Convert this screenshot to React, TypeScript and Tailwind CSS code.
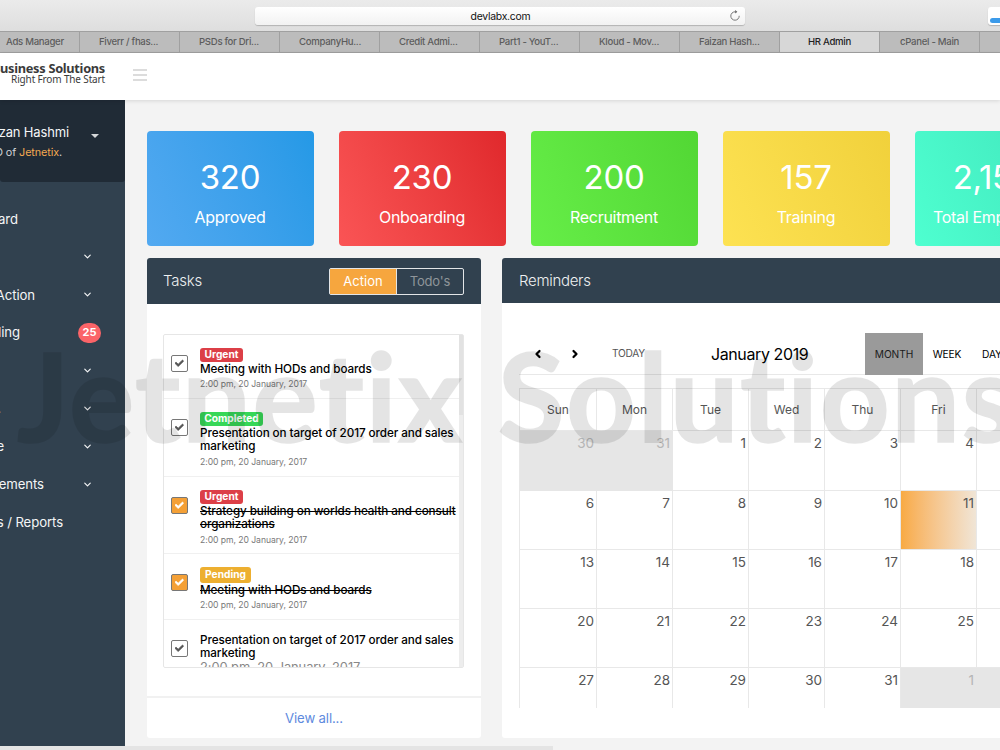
import { ChevronDown, ChevronLeft, ChevronRight } from "lucide-react";
import { FaCheck } from "react-icons/fa";

const TABS = [
  { label: "Ads Manager", pad: "pl-[26px]" },
  { label: "Fiverr / fhas...", pad: "pl-[19px]" },
  { label: "PSDs for Dri...", pad: "pl-[19px]" },
  { label: "CompanyHu...", pad: "pl-[19px]" },
  { label: "Credit Admi...", pad: "pl-[19px]" },
  { label: "Part1 - YouT...", pad: "pl-[19px]" },
  { label: "Kloud - Mov...", pad: "pl-[19px]" },
  { label: "Faizan Hash...", pad: "pl-[19px]" },
  { label: "HR Admin", pad: "pl-[28px]", active: true },
  { label: "cPanel - Main", pad: "pl-[20px]" },
  { label: "", pad: "" },
];

const MENU = [
  { label: "ard", width: "w-[18px]" },
  { label: "", width: "w-0", chevron: true },
  { label: "Action", width: "w-[35px]", chevron: true },
  { label: "ding", width: "w-[20px]", count: 25 },
  { label: "", width: "w-0", chevron: true },
  { label: ".", width: "w-[1px]", chevron: true },
  { label: "e", width: "w-[4px]", chevron: true },
  { label: "ements", width: "w-[44px]", chevron: true },
  { label: "s / Reports", width: "w-[63px]" },
];

const STATS = [
  { value: "320", label: "Approved", style: "w-[167px] from-[#52a9f1] to-[#2499e6]" },
  { value: "230", label: "Onboarding", style: "w-[167px] from-[#fa5455] to-[#e0282c]" },
  { value: "200", label: "Recruitment", style: "w-[167px] from-[#66ee48] to-[#52d734]" },
  { value: "157", label: "Training", style: "w-[167px] from-[#fde252] to-[#f1d13b]" },
  { value: "2,150", label: "Total Employees", style: "w-[156px] from-[#4effd0] to-[#41e6bc]" },
];

const TASKS = [
  {
    tag: "Urgent",
    tagClass: "w-[43px] h-[14px] bg-[#dc3f47]",
    title: "Meeting with HODs and boards",
    row: "h-[64px]",
    done: false,
  },
  {
    tag: "Completed",
    tagClass: "w-[63px] h-[14px] bg-[#37d758]",
    title: "Presentation on target of 2017 order and sales marketing",
    row: "h-[78px]",
    done: false,
  },
  {
    tag: "Urgent",
    tagClass: "w-[43px] h-[14px] bg-[#dc3f47]",
    title: "Strategy building on worlds health and consult organizations",
    row: "h-[77px]",
    done: true,
  },
  {
    tag: "Pending",
    tagClass: "w-[51px] h-[16px] bg-[#edaf30]",
    title: "Meeting with HODs and boards",
    row: "h-[66px]",
    done: true,
  },
  {
    title: "Presentation on target of 2017 order and sales marketing",
    row: "h-[80px]",
    done: false,
    large: true,
  },
];

const DAYS = ["Sun", "Mon", "Tue", "Wed", "Thu", "Fri", "Sat"];

const WEEKS = [
  { height: "h-[60px]", days: [30, 31, 1, 2, 3, 4, 5] },
  { height: "h-[59px]", days: [6, 7, 8, 9, 10, 11, 12] },
  { height: "h-[59px]", days: [13, 14, 15, 16, 17, 18, 19] },
  { height: "h-[59px]", days: [20, 21, 22, 23, 24, 25, 26] },
  { height: "h-[40px]", days: [27, 28, 29, 30, 31, 1, 2] },
];

function BrowserBar() {
  return (
    <div className="shrink-0">
      <div className="flex h-[31px] items-center bg-linear-to-b from-[#ebebeb] to-[#dedede] pl-[255px]">
        <div className="flex h-[18px] w-[490px] shrink-0 items-center rounded-[3px] bg-linear-to-b from-white to-[#f2f2f2] shadow-[0_1px_1px_rgba(0,0,0,0.2)]">
          <span className="flex-1 pt-[2px] pl-[1px] text-center text-[10.4px] tracking-[-0.25px] text-[#111]">
            devlabx.com
          </span>
          <svg className="-ml-[15px] mr-[5px]" width="10" height="11" viewBox="0 0 10 11" fill="none" stroke="#777" strokeWidth="1">
            <path d="M9.2 5.8A4.2 4.2 0 1 1 5 1.8h2" />
            <path d="M5 0l2.4 1.8L5 3.6z" fill="#777" stroke="none" />
          </svg>
        </div>
        <div className="ml-[243px] flex h-[18px] w-[30px] shrink-0 items-end rounded-[3px] bg-white pb-[2px] pl-[2px] shadow-[0_1px_1px_rgba(0,0,0,0.2)]">
          <div className="h-[5px] w-[28px] rounded-full bg-[#3c9bea]" />
        </div>
      </div>
      <div className="-ml-[20px] flex h-[22px] border-y border-[#a0a0a0]">
        {TABS.map((tab, i) => (
          <div
            key={i}
            className={`flex w-[100px] shrink-0 items-center whitespace-nowrap border-r border-[#a0a0a0] text-[9.6px] font-medium tracking-[-0.3px] ${tab.pad} ${
              tab.active ? "bg-[#d7d7d7] text-[#222]" : "bg-[#bcbcbc] text-[#5c5c5c]"
            }`}
          >
            {tab.label}
          </div>
        ))}
      </div>
    </div>
  );
}

function Header() {
  return (
    <header className="z-10 flex h-[47px] shrink-0 bg-white shadow-[0_1px_4px_rgba(0,0,0,0.12)]">
      <div className="flex w-[105px] flex-col items-end whitespace-nowrap pt-[8px] font-['Noto_Sans',sans-serif] text-[#3a3a3a]">
        <span className="text-[12.8px] leading-[15px] font-bold tracking-[-0.3px]">Business Solutions</span>
        <span className="-mt-[2px] text-[10px] leading-[11px] tracking-[-0.15px]">Right From The Start</span>
      </div>
      <div className="ml-[28px] flex flex-col gap-[3px] pt-[16px]">
        <span className="h-[2px] w-[14px] bg-[#dcdcdc]" />
        <span className="h-[2px] w-[14px] bg-[#dcdcdc]" />
        <span className="h-[2px] w-[14px] bg-[#dcdcdc]" />
      </div>
    </header>
  );
}

function Sidebar() {
  return (
    <aside className="w-[125px] shrink-0 overflow-hidden bg-[#31414f] text-[#f4f5f6]">
      <div className="flex h-[82px] rounded-b-[3px] bg-[#202b36] pt-[23px]">
        <div className="flex w-[69px] flex-col items-end whitespace-nowrap">
          <span className="text-[13px] leading-[18px] tracking-[-0.15px]">Faizan Hashmi</span>
          <span className="mt-[5px] mr-[7px] text-[10.8px] leading-[14px] tracking-[-0.1px] text-[#d0d3d6]">
            CEO of <span className="text-[#f3a951]">Jetnetix</span>.
          </span>
        </div>
        <svg className="mt-[11px] ml-[22px]" width="8" height="4" viewBox="0 0 8 4" fill="#d5d8da">
          <path d="M0 0h8L4 4z" />
        </svg>
      </div>
      <nav className="pt-[18px]">
        {MENU.map((item, i) => (
          <div key={i} className="flex h-[37.9px] items-center">
            <span
              className={`flex justify-end pt-[1.5px] text-[13.2px] tracking-[-0.1px] whitespace-nowrap ${item.width}`}
            >
              {item.label}
            </span>
            {item.chevron && (
              <span className="mr-[32px] ml-auto">
                <ChevronDown size={11} strokeWidth={2.6} />
              </span>
            )}
            {item.count && (
              <span className="mr-[24px] ml-auto flex h-[20px] w-[23px] items-center justify-center rounded-full bg-[#fb6468] text-[11px] font-bold text-white">
                {item.count}
              </span>
            )}
          </div>
        ))}
      </nav>
    </aside>
  );
}

function TaskItem({ task }: { task: (typeof TASKS)[number] }) {
  return (
    <div className={`flex shrink-0 border-b border-[#f0f0f0] pl-[7px] ${task.row}`}>
      <span
        className={`mt-[20px] flex h-[17px] w-[17px] shrink-0 items-center justify-center rounded-[2px] border border-[#777] ${
          task.done ? "bg-[#f4a036] text-white" : "bg-white text-[#555]"
        }`}
      >
        <FaCheck size={8.5} stroke="currentColor" strokeWidth={40} />
      </span>
      <div className="ml-[12px] w-[262px] shrink-0 pt-[13px]">
        {task.tag && (
          <span
            className={`flex items-center justify-center rounded-[3px] text-[10.2px] font-bold text-white ${task.tagClass}`}
          >
            {task.tag}
          </span>
        )}
        <p
          className={`pt-[1px] text-[11.7px] leading-[13.4px] font-medium tracking-[-0.08px] text-black ${
            task.done ? "line-through" : ""
          }`}
        >
          {task.title}
        </p>
        <p
          className={
            task.large
              ? "text-[12.9px] leading-[14px] tracking-[-0.08px] text-[#888]"
              : "mt-[3px] text-[8.6px] leading-[11px] tracking-[-0.04px] text-[#777]"
          }
        >
          2:00 pm, 20 January, 2017
        </p>
      </div>
    </div>
  );
}

function TasksPanel() {
  return (
    <section className="flex h-[480px] w-[334px] shrink-0 flex-col overflow-hidden rounded-[3px] bg-white">
      <div className="flex h-[46px] shrink-0 items-center bg-[#31414f] pr-[17px] pl-[16px] text-[#eef0f1]">
        <h2 className="flex-1 text-[15px] font-light tracking-[-0.2px]">Tasks</h2>
        <div className="flex h-[27px] w-[135px] rounded-[2px] border border-[#e3e5e7] text-[13px]">
          <span className="flex w-[67px] items-center justify-center border-r border-[#e3e5e7] bg-[#f6a63e] pt-[1px] text-white">
            Action
          </span>
          <span className="flex flex-1 items-center justify-center pt-[1px] tracking-[-0.2px] text-[#8f959a]">
            Todo's
          </span>
        </div>
      </div>
      <div className="mt-[30px] ml-[16px] flex h-[334px] w-[301px] shrink-0 rounded-[2px] border border-[#e6e6e6]">
        <div className="flex w-[295px] flex-col overflow-hidden">
          {TASKS.map((task, i) => (
            <TaskItem key={i} task={task} />
          ))}
        </div>
        <div className="flex-1 bg-[#ededed]">
          <div className="h-[80px] bg-[#e2e2e2]" />
        </div>
      </div>
      <div className="mt-[28px] flex flex-1 items-center justify-center border-t-2 border-[#f1f1f1] pt-[1px] text-[13.2px] tracking-[-0.15px] text-[#5e8ade]">
        View all...
      </div>
    </section>
  );
}

function Calendar() {
  return (
    <div className="ml-[17px] w-[534px] overflow-hidden">
      <div className="flex h-[42px] items-center border-b border-[#e8e8e8] text-black">
        <ChevronLeft className="ml-[13px]" size={12} strokeWidth={4.5} />
        <ChevronRight className="ml-[25px]" size={12} strokeWidth={4.5} />
        <span className="ml-[31px] w-[40px] pt-[1px] text-[10.2px] tracking-[-0.25px] text-[#555]">TODAY</span>
        <h3 className="ml-[59px] w-[154px] text-[16px] tracking-[-0.4px] whitespace-nowrap">January 2019</h3>
        <div className="flex h-full shrink-0 items-center text-[10.2px] tracking-[-0.1px]">
          <span className="flex h-[42px] w-[58px] items-center justify-center bg-[#9a9a9a] pt-[2px] text-[#1c1c1c]">
            MONTH
          </span>
          <span className="flex w-[48px] items-center justify-center pt-[2px]">WEEK</span>
          <span className="flex w-[44px] items-center pt-[2px] pl-[11px]">DAY</span>
        </div>
      </div>
      <div className="mt-[13px] border-t border-l border-[#e8e8e8]">
        <div className="grid h-[42px] grid-cols-[77px_repeat(6,76px)] border-b border-[#e8e8e8] text-[12px] text-[#555]">
          {DAYS.map((day) => (
            <span key={day} className="flex items-center justify-center border-r border-[#e8e8e8]">
              {day}
            </span>
          ))}
        </div>
        {WEEKS.map((week, w) => (
          <div
            key={w}
            className={`grid grid-cols-[77px_repeat(6,76px)] text-[13.5px] leading-[16px] text-[#555] ${week.height}`}
          >
            {week.days.map((day, d) => {
              const outside = (w === 0 && day > 20) || (w === 4 && day < 10);
              const today = w === 1 && day === 11;
              return (
                <span
                  key={d}
                  className={`border-r pt-[4px] pr-[2px] text-right ${w === 4 ? "" : "border-b"} ${
                    outside ? "border-[#e6e6e6] bg-[#e6e6e6] text-[#b5b5b5]" : "border-[#e8e8e8]"
                  } ${today ? "bg-linear-to-r from-[#f8aa42] to-[#f0e5d6]" : ""}`}
                >
                  {day}
                </span>
              );
            })}
          </div>
        ))}
      </div>
    </div>
  );
}

function RemindersPanel() {
  return (
    <section className="flex h-[480px] w-[560px] shrink-0 flex-col overflow-hidden rounded-[3px] bg-white">
      <div className="mb-[30px] flex h-[45px] shrink-0 items-center bg-[#31414f] pt-[1px] pl-[17px] text-[15px] font-light tracking-[-0.3px] text-[#eef0f1]">
        Reminders
      </div>
      <Calendar />
    </section>
  );
}

export default function App() {
  return (
    <div className="relative flex h-[750px] w-[1000px] flex-col overflow-hidden bg-[#f3f3f3] font-['Inter',sans-serif]">
      <BrowserBar />
      <Header />
      <div className="flex h-[646px] shrink-0">
        <Sidebar />
        <main className="flex flex-1 flex-col overflow-hidden pt-[31px] pl-[22px]">
          <div className="flex gap-[25px]">
            {STATS.map((stat) => (
              <div
                key={stat.label}
                className={`flex h-[115px] shrink-0 flex-col items-center rounded-[4px] bg-linear-65 text-white ${stat.style}`}
              >
                <span className="mt-[24px] mr-[1px] text-[33px] leading-[44px] tracking-[-0.3px]">{stat.value}</span>
                <span className="mt-[7px] mr-[1px] text-[16px] leading-[22px] tracking-[-0.3px] whitespace-nowrap">
                  {stat.label}
                </span>
              </div>
            ))}
          </div>
          <div className="mt-[12px] flex gap-[21px]">
            <TasksPanel />
            <RemindersPanel />
          </div>
        </main>
      </div>
      <div className="flex h-[4px] shrink-0 bg-[#f3f3f3]">
        <div className="w-[553px] bg-[#e4e4e4]" />
      </div>

      {/* Watermark */}
      <div className="pointer-events-none absolute top-[311px] left-[17px] z-20 font-['Lato',sans-serif] text-[122px] leading-[168px] font-bold tracking-[1.6px] whitespace-nowrap text-black opacity-10 [font-variant-ligatures:none] [word-spacing:3px] [-webkit-text-stroke:1.6px_black]">
        Jetnetix Solutions
      </div>
    </div>
  );
}
